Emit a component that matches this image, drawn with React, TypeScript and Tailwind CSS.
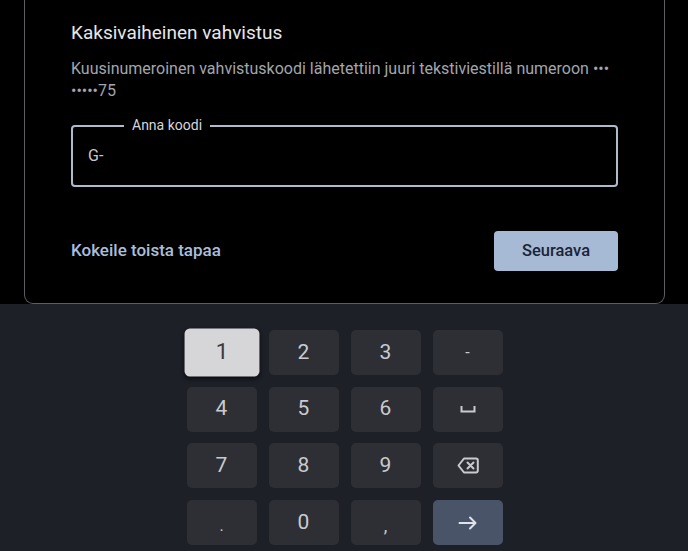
import React from "react";

const font = { fontFamily: "Roboto, 'Noto Sans', 'Liberation Sans', sans-serif" };

function Key({ children, pressed, accent }: { children: React.ReactNode; pressed?: boolean; accent?: boolean }) {
  const base = "h-[45px] w-[70px] rounded-[5px] flex items-center justify-center text-[21px]";
  if (pressed)
    return (
      <div className={base + " bg-[#d6d5d7] text-[#3a3b3e] scale-[1.07] shadow-[0_2px_4px_rgba(0,0,0,0.6)]"}>{children}</div>
    );
  if (accent) return <div className={base + " bg-[#4a5468] text-[#dfe3ea]"}>{children}</div>;
  return <div className={base + " bg-[#2d2f35] text-[#c9cbcf]"}>{children}</div>;
}

export default function App() {
  return (
    <div className="w-[688px] h-[551px] overflow-hidden bg-black flex flex-col" style={font}>
      <div className="h-[304px] shrink-0 bg-black pl-[24px] pr-[23px]">
        <div className="h-full border-x border-b border-[#5b5e63] rounded-b-[9px] pl-[46px] pr-[46px] pt-[20px]">
          <div className="text-[19px] leading-[26px] text-[#e6e7e9]">Kaksivaiheinen vahvistus</div>
          <div className="mt-[12px] text-[16px] leading-[22px] text-[#a3a6ab]">
            Kuusinumeroinen vahvistuskoodi lähetettiin juuri tekstiviestillä numeroon •••
            <br />
            •••••75
          </div>
          <div className="relative mt-[23px] h-[62px] border-2 border-[#aebbcd] rounded-[4px] flex items-center pl-[15px]">
            <span className="absolute left-[51px] top-[-10px] bg-black px-[8px] text-[14px] leading-[16px] text-[#d3d7de]">
              Anna koodi
            </span>
            <span className="text-[16px] text-[#c6c8cc]">G-</span>
          </div>
          <div className="mt-[44px] flex items-center justify-between">
            <span className="text-[17px] font-medium text-[#a9bedb]">Kokeile toista tapaa</span>
            <div className="h-[40px] w-[124px] rounded-[4px] bg-[#a6bad6] flex items-center justify-center text-[16.5px] font-medium text-[#1b2436]">
              Seuraava
            </div>
          </div>
        </div>
      </div>
      <div className="flex-1 bg-[#1e2028] pt-[26px] flex justify-center pl-[1px]">
        <div className="grid grid-cols-[70px_70px_70px_70px] gap-x-[12px] gap-y-[11.7px] h-fit">
          <Key pressed>1</Key>
          <Key>2</Key>
          <Key>3</Key>
          <Key>
            <span className="text-[16px]">-</span>
          </Key>
          <Key>4</Key>
          <Key>5</Key>
          <Key>6</Key>
          <Key>
            <svg width="16" height="8" viewBox="0 0 16 8" fill="none" stroke="#c9cbcf" strokeWidth="2">
              <path d="M1.5 1v5.5h13V1" />
            </svg>
          </Key>
          <Key>7</Key>
          <Key>8</Key>
          <Key>9</Key>
          <Key>
            <svg width="22" height="17" viewBox="0 0 22 17" fill="none" stroke="#c9cbcf" strokeWidth="2" strokeLinejoin="round" strokeLinecap="round">
              <path d="M7 1.5h12a1.8 1.8 0 0 1 1.8 1.8v10.4a1.8 1.8 0 0 1-1.8 1.8H7L1.5 8.5z" />
              <path d="M10.5 5.5l6 6M16.5 5.5l-6 6" />
            </svg>
          </Key>
          <Key>
            <span className="text-[16px] mt-[6px]">.</span>
          </Key>
          <Key>0</Key>
          <Key>
            <span className="text-[18px] mt-[6px]">,</span>
          </Key>
          <Key accent>
            <svg width="20" height="14" viewBox="0 0 20 14" fill="none" stroke="#dfe3ea" strokeWidth="2" strokeLinecap="round" strokeLinejoin="round">
              <path d="M1.5 7h16M12 1.5L17.5 7 12 12.5" />
            </svg>
          </Key>
        </div>
      </div>
    </div>
  );
}
